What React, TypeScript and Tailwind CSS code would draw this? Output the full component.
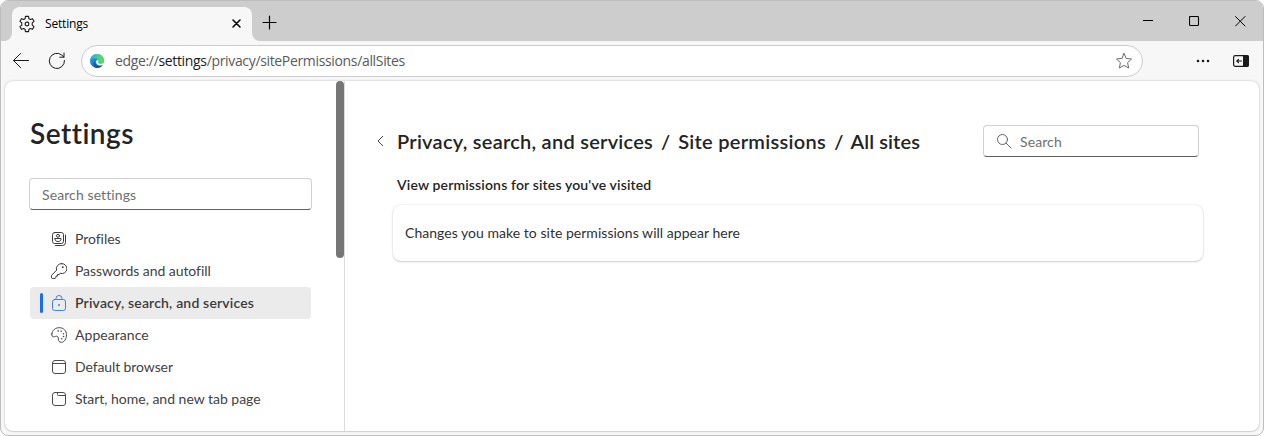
import type { ReactNode } from "react";

function Icon({ size = 16, className = "", children }: { size?: number; className?: string; children: ReactNode }) {
  return (
    <svg
      width={size}
      height={size}
      viewBox={`0 0 ${size} ${size}`}
      fill="none"
      stroke="currentColor"
      strokeWidth={1}
      strokeLinecap="round"
      strokeLinejoin="round"
      className={`block shrink-0 ${className}`}
    >
      {children}
    </svg>
  );
}

function GearIcon() {
  return (
    <svg width="18" height="18" viewBox="0 0 20 20" className="block shrink-0 text-[#1b1b1b]" fill="none" stroke="currentColor" strokeWidth="1.25" strokeLinejoin="round">
      <circle cx="10" cy="10" r="2.1" />
      <path d="M8.300 1.500h3.400l.5 2.700 1.500.8 2.400-.9 1.700 2.900-2 1.800v2.400l2 1.800-1.700 2.900-2.400-.9-1.500.8-.5 2.700H8.300l-.5-2.700-1.500-.8-2.400.9-1.700-2.900 2-1.800V8.800l-2-1.800 1.700-2.900 2.400.9 1.500-.8z" />
    </svg>
  );
}

function EdgeLogo() {
  return (
    <svg width="14" height="14" viewBox="0 0 28 28" className="block shrink-0">
      <defs>
        <linearGradient id="edgeTop" x1="0" y1="0.4" x2="1" y2="0.5">
          <stop offset="0" stopColor="#2aa9dd" />
          <stop offset="0.4" stopColor="#3fc79b" />
          <stop offset="1" stopColor="#63dc58" />
        </linearGradient>
        <linearGradient id="edgeLeft" x1="0" y1="0" x2="0.6" y2="1">
          <stop offset="0" stopColor="#25a4e4" />
          <stop offset="1" stopColor="#1570c4" />
        </linearGradient>
      </defs>
      <circle cx="14" cy="14" r="14" fill="url(#edgeLeft)" />
      <path d="M9 15c0 7 6 11 16 8a14 14 0 0 1-13 4.800C6 25 5 17 12 11z" fill="#10569d" />
      <path d="M0 13C1 5 7 0 14 0c8 0 14 6 14 12.500 0 4.500-3.500 7-7.500 7-3 0-5-1.200-5-2.300 0-.8 1.200-1.300 1.200-3.200 0-3-3-5.500-7.200-5.500C5 8.500 1.500 10.500 0 13z" fill="url(#edgeTop)" />
      <path d="M16.700 14c0 1.900-1.200 2.400-1.200 3.200 0 1.100 2 2.300 5 2.300 2.700 0 5-1 6.400-3 1.100 1.500.5 3.500-.9 5-3 1.800-8.500 2-11.500-.5-3-2.500-3-7 0-9.500 1.200.3 2.200 1.200 2.200 2.500z" fill="#fff" />
    </svg>
  );
}

function StarIcon() {
  return (
    <Icon size={18} className="text-[#6b6b6b]">
      <path d="M9 1.500l2.200 4.900 5.300.6-3.900 3.600 1 5.400L9 13.400 4.400 16l1-5.400L1.500 7l5.300-.6z" />
    </Icon>
  );
}

function ProfilesIcon() {
  return (
    <Icon className="text-[#3b3b3b]">
      <rect x="1.500" y="1.500" width="11" height="11" rx="2.200" />
      <circle cx="7" cy="4.800" r="1.500" />
      <path d="M4 7.500h6v.8C10 9.700 8.700 10.500 7 10.500S4 9.700 4 8.300z" />
      <path d="M14.500 4v7.500a3 3 0 0 1-3 3H4.500" />
    </Icon>
  );
}

function KeyIcon() {
  return (
    <Icon className="text-[#3b3b3b]">
      <path d="M10.400.6a5 5 0 1 1-1.100 9.700L8 11.500H6.500V13H5v1.500l-.9.9H1.300a.8.800 0 0 1-.8-.8v-2.200l5.100-5.200A5 5 0 0 1 10.400.6z" />
      <circle cx="11.800" cy="4.200" r=".9" fill="currentColor" stroke="none" />
    </Icon>
  );
}

function LockIcon() {
  return (
    <Icon className="text-[#3b82e6]">
      <rect x="1.500" y="4.500" width="13" height="11" rx="2.200" />
      <path d="M5 4.300V3.500a3 3 0 0 1 6 0v.8" />
      <circle cx="8" cy="10" r="1" fill="currentColor" stroke="none" />
    </Icon>
  );
}

function PaletteIcon() {
  return (
    <Icon className="text-[#4a4a4a]">
      <path d="M.8 6.900C1.300 3 4.500.7 8.400.7c4.200 0 7.100 3.100 7.100 7.100 0 3.700-2 7.500-5.200 7.500-2 0-3-1.300-3-3.200V11c0-1.600-1.200-2.100-2.700-1.600l-1.200.4C1.700 10.200.4 9 .8 6.900z" />
      <g fill="currentColor" stroke="none">
        <circle cx="7.200" cy="3.900" r=".8" />
        <circle cx="10.200" cy="4.300" r=".8" />
        <circle cx="12.400" cy="6.700" r=".8" />
        <circle cx="12.500" cy="9.500" r=".8" />
        <circle cx="10.800" cy="11.800" r=".8" />
      </g>
    </Icon>
  );
}

function BrowserIcon() {
  return (
    <Icon className="text-[#4a4a4a]">
      <rect x="1.500" y="1.500" width="13" height="13" rx="2.500" />
      <path d="M1.500 4.500h13" />
    </Icon>
  );
}

function TabPageIcon() {
  return (
    <Icon className="text-[#4a4a4a]">
      <rect x="1.500" y="1.500" width="13" height="13" rx="2.500" />
      <path d="M6.500 1.500v2a1 1 0 0 0 1 1h7" />
    </Icon>
  );
}

const navItems = [
  { label: "Profiles", icon: <ProfilesIcon />, spacing: "tracking-[-0.05px]" },
  { label: "Passwords and autofill", icon: <KeyIcon />, spacing: "tracking-[-0.06px]" },
  { label: "Privacy, search, and services", icon: <LockIcon />, spacing: "tracking-[0.17px]", active: true },
  { label: "Appearance", icon: <PaletteIcon />, spacing: "tracking-[0.05px]" },
  { label: "Default browser", icon: <BrowserIcon />, spacing: "tracking-[-0.1px]" },
  { label: "Start, home, and new tab page", icon: <TabPageIcon />, spacing: "tracking-[-0.01px]" },
];

function TabStrip() {
  return (
    <div className="flex h-10 shrink-0 bg-[#cdcdcd]">
      <div className="flex w-[11px] items-end bg-[#f7f7f7]">
        <div className="h-full w-full rounded-br-lg bg-[#cdcdcd]" />
      </div>
      <div className="flex w-[240px] flex-col bg-[#cdcdcd] pt-1.5">
        <div className="flex flex-1 items-center rounded-t-lg bg-[#f7f7f7] pr-[11px] pb-px pl-1.5">
          <GearIcon />
          <span className="ml-[9px] flex-1 font-['Open_Sans','Noto_Sans',sans-serif] text-[12px] leading-4 tracking-[-0.18px] text-black">Settings</span>
          <Icon size={9} className="text-black">
            <path d="M1 1l7 7M8 1l-7 7" strokeWidth="1.500" />
          </Icon>
        </div>
      </div>
      <div className="flex flex-1 bg-[#f7f7f7]">
        <div className="flex flex-1 rounded-bl-lg bg-[#cdcdcd]">
          <Icon size={15} className="mt-[14px] ml-[10px] text-black">
            <path d="M7.500 1v13M1 7.500h13" strokeWidth="1.200" />
          </Icon>
          <div className="ml-auto flex items-start gap-[35px] pt-[15px] pr-[17px] text-black">
            <Icon size={11}>
              <path d="M0 4.500h10" strokeLinecap="butt" />
            </Icon>
            <Icon size={11}>
              <rect x=".5" y=".5" width="9" height="9" rx="1" strokeWidth="1.100" />
            </Icon>
            <Icon size={11}>
              <path d="M.5.500l9.500 9.500M10 .5L.5 10" />
            </Icon>
          </div>
        </div>
      </div>
    </div>
  );
}

function Toolbar() {
  return (
    <div className="flex h-10 shrink-0 items-center bg-[#f7f7f7] pl-[11px]">
      <Icon size={17} className="text-[#1b1b1b]">
        <path d="M17 7.500H1.500M8.500.500l-7 7 7 7" />
      </Icon>
      <Icon size={18} className="ml-[19px] text-[#1b1b1b]">
        <path d="M16.500 8.500A7.600 7.600 0 1 1 13.700 3L16 5M16 1v4.200h-4.200" />
      </Icon>
      <div className="ml-[15px] flex h-8 w-[1062px] items-center rounded-full border border-[#cbcbcb] bg-white pr-[9px] pl-2">
        <EdgeLogo />
        <span className="ml-[11px] flex-1 font-['Open_Sans','Noto_Sans',sans-serif] text-[14px] leading-5 tracking-[-0.34px] text-[#5a5a5a]">
          edge://<span className="text-[#1b1b1b]">settings</span>/privacy/sitePermissions/allSites
        </span>
        <StarIcon />
      </div>
      <Icon size={16} className="ml-[52px] text-[#1b1b1b]">
        <g fill="currentColor" stroke="none">
          <circle cx="3" cy="8" r="1.300" />
          <circle cx="8" cy="8" r="1.300" />
          <circle cx="13" cy="8" r="1.300" />
        </g>
      </Icon>
      <Icon size={16} className="ml-[22px] text-[#1b1b1b]">
        <rect x=".6" y="2.600" width="14.800" height="10.800" rx="1.800" strokeWidth="1.200" />
        <path d="M10 2h4a2 2 0 0 1 2 2v8a2 2 0 0 1-2 2h-4z" fill="currentColor" stroke="none" />
        <path d="M8.500 8H4M5.500 6.300L3.800 8l1.700 1.700" strokeWidth="1.200" />
      </Icon>
    </div>
  );
}

function Sidebar() {
  return (
    <aside className="flex w-[340px] shrink-0 border-r border-[#dcdcdc]">
      <div className="flex flex-1 flex-col pl-6">
        <h1 className="mt-8 ml-px text-[28px] leading-10 font-semibold tracking-[0.5px] whitespace-nowrap text-[#242424]">Settings</h1>
        <div className="mt-[25px] flex h-8 w-[283px] items-center rounded border border-[#d1d1d1] border-b-[#616161] px-3 pt-0.5 text-sm text-[#707070]">
          <span className="tracking-[0.1px]">Search settings</span>
        </div>
        <nav className="mt-[13px] flex flex-col">
          {navItems.map((item) => (
            <div
              key={item.label}
              className={
                item.active
                  ? "ml-px flex h-8 w-[281px] items-center rounded bg-[#ebebeb] pl-2.5 text-sm font-semibold text-[#3b3b3b]"
                  : "ml-px flex h-8 w-[281px] items-center pl-2.5 text-sm text-[#424242]"
              }
            >
              <div className={item.active ? "h-5 w-[3px] rounded-sm bg-[#1a6fe8]" : "h-5 w-[3px]"} />
              <div className="ml-2">{item.icon}</div>
              <span className={`ml-2 whitespace-nowrap ${item.spacing}`}>{item.label}</span>
            </div>
          ))}
        </nav>
      </div>
      <div className="h-[177px] w-2 rounded-full bg-[#767676]" />
    </aside>
  );
}

function Content() {
  return (
    <main className="flex flex-1 flex-col pr-[56px] pl-[31px]">
      <div className="mt-11 flex h-8 items-center pr-1">
        <Icon size={10} className="text-[#424242]">
          <path d="M7 0L2 5l5 5" />
        </Icon>
        <div className="ml-[11px] flex h-8 flex-1 items-center text-[20px] font-semibold whitespace-nowrap text-[#242424]">
          <span className="w-[256px] tracking-[0.25px]">Privacy, search, and services</span>
          <span className="ml-2">/</span>
          <span className="ml-2 w-[148px] tracking-[0.28px]">Site permissions</span>
          <span className="ml-2">/</span>
          <span className="ml-[7px] tracking-[0.1px]">All sites</span>
        </div>
        <div className="flex h-8 w-[216px] items-center rounded border border-[#d1d1d1] border-b-[#616161] pl-3 text-sm text-[#707070]">
          <Icon className="text-[#616161]">
            <circle cx="6.500" cy="6.500" r="5" />
            <path d="M10.200 10.200l4.800 4.800" />
          </Icon>
          <span className="ml-2 pt-0.5 tracking-[0.1px]">Search</span>
        </div>
      </div>
      <h2 className="mt-[18px] ml-[21px] text-sm font-semibold tracking-[0.15px] text-[#242424]">View permissions for sites you've visited</h2>
      <div className="mt-[10px] ml-[17px] flex h-[56px] items-center rounded-lg bg-white pl-3 text-sm text-[#303030] shadow-[0_0_2px_rgba(0,0,0,0.16),0_1px_2px_rgba(0,0,0,0.16)]">
        <span className="tracking-[0.03px]">Changes you make to site permissions will appear here</span>
      </div>
    </main>
  );
}

export default function App() {
  return (
    <div className="flex h-[436px] w-[1264px] flex-col overflow-hidden rounded-lg border border-[#bdbdbd] bg-[#f7f7f7] font-['Lato',sans-serif] [font-variant-ligatures:none]">
      <TabStrip />
      <Toolbar />
      <div className="mr-1 ml-1 flex h-[350px] shrink-0 overflow-hidden rounded-lg bg-white shadow-[0_0_2px_rgba(0,0,0,0.3),0_1px_1px_rgba(0,0,0,0.08)]">
        <Sidebar />
        <Content />
      </div>
    </div>
  );
}
